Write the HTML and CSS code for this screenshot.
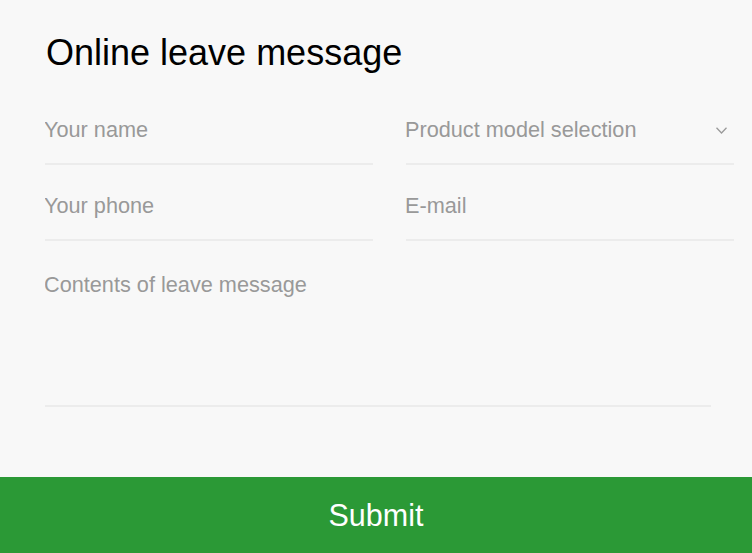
FILE: index.html
```html
<!DOCTYPE html>
<html>
<head>
<meta charset="utf-8">
<link rel="stylesheet" href="styles.css">
</head>
<body>

<div class="message-page">
  <div class="message-box">
    <h1 class="message-title">Online leave message</h1>

    <!-- form fields -->
    <div class="field-grid">
      <input type="text" class="field" placeholder="Your name">
      <div class="select-wrap">
        <select class="field field-select">
          <option value="" selected>Product model selection</option>
        </select>
        <svg class="select-arrow" width="11" height="7" viewBox="0 0 11 7">
          <path d="M0.5 0.8 L5.5 6 L10.5 0.8" fill="none" stroke="#9a9a9a" stroke-width="1.3"/>
        </svg>
      </div>
      <input type="text" class="field" placeholder="Your phone">
      <input type="text" class="field" placeholder="E-mail">
    </div>

    <textarea class="field-area" placeholder="Contents of leave message"></textarea>
  </div>

  <button class="submit-btn">Submit</button>
</div>

</body>
</html>
```

FILE: styles.css
```css
/* page */
html, body {
  margin: 0;
  background: #f8f8f8;
}
.message-page {
  font-family: "Liberation Sans", Arial, sans-serif;
}
.message-box {
  padding: 0 18px 0 45px;
}
.message-title {
  margin: 32px 0 16px 1px;
  font-size: 36px;
  font-weight: normal;
  line-height: 41px;
  color: #000;
}

/* inputs */
.field-grid {
  display: grid;
  grid-template-columns: 1fr 1fr;
  column-gap: 33px;
}
.field {
  display: block;
  width: 100%;
  height: 76px;
  box-sizing: border-box;
  padding: 7px 0 0 0;
  margin: 0;
  border: none;
  border-bottom: 2px solid #ececec;
  background: transparent;
  font-family: inherit;
  font-size: 21.7px;
  text-indent: -1px;
  color: #999;
  outline: none;
}
.field::placeholder {
  color: #999;
}
.select-wrap {
  position: relative;
}
.field-select {
  appearance: none;
  -webkit-appearance: none;
  border-radius: 0;
  cursor: pointer;
}
.select-arrow {
  position: absolute;
  right: 7px;
  top: 38px;
  pointer-events: none;
}

.field-area {
  display: block;
  width: 666px;
  height: 166px;
  box-sizing: border-box;
  padding: 31px 0 0 0;
  margin: 0;
  border: none;
  border-bottom: 2px solid #ececec;
  background: transparent;
  font-family: inherit;
  font-size: 21.7px;
  text-indent: -1px;
  color: #999;
  resize: none;
  outline: none;
}
.field-area::placeholder {
  color: #999;
}

/* button */
.submit-btn {
  display: block;
  width: 100%;
  height: 76px;
  margin-top: 70px;
  padding-top: 2px;
  border: none;
  background: #2b9936;
  color: #fff;
  font-family: inherit;
  font-size: 30.5px;
  cursor: pointer;
}
```
